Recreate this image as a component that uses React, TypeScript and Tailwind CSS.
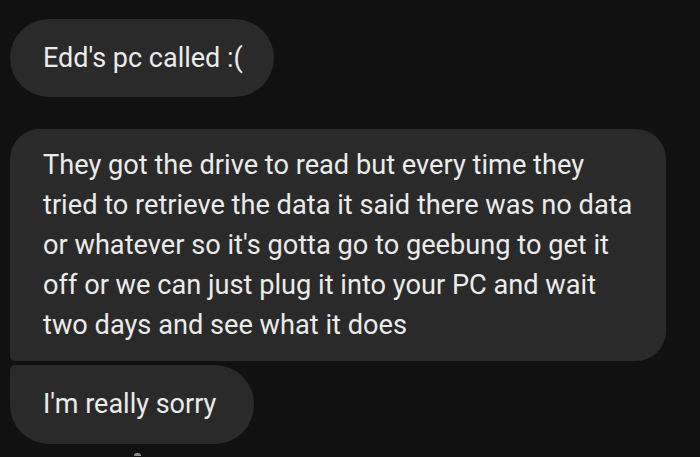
export default function App() {
  return (
    <div
      className="h-[457px] w-[700px] overflow-hidden bg-[#111111] pl-[10px] pt-[19px] text-[#ebebeb]"
      style={{ fontFamily: "Roboto, 'Noto Sans', sans-serif" }}
    >
      <div className="flex h-[78px] w-[264px] items-center rounded-[39px] bg-[#2a2a2a] pl-[33px] text-[27px]">
        Edd's pc called :(
      </div>

      <div className="mt-[32px] w-[656px] rounded-[30px] rounded-bl-[5px] bg-[#2a2a2a] px-[33px] py-[16px] text-[27.2px] leading-[40px]">
        <div className="whitespace-nowrap">They got the drive to read but every time they</div>
        <div className="whitespace-nowrap">tried to retrieve the data it said there was no data</div>
        <div className="whitespace-nowrap">or whatever so it's gotta go to geebung to get it</div>
        <div className="whitespace-nowrap">off or we can just plug it into your PC and wait</div>
        <div className="whitespace-nowrap">two days and see what it does</div>
      </div>

      <div className="mt-[4px] flex h-[79px] w-[244px] items-center rounded-[39px] rounded-tl-[5px] bg-[#2a2a2a] pl-[33px] text-[27px]">
        I'm really sorry
      </div>

      <div className="ml-[124px] mt-[9px] h-[3px] w-[7px] rounded-t-full bg-[#8a8a8a]" />
    </div>
  );
}
